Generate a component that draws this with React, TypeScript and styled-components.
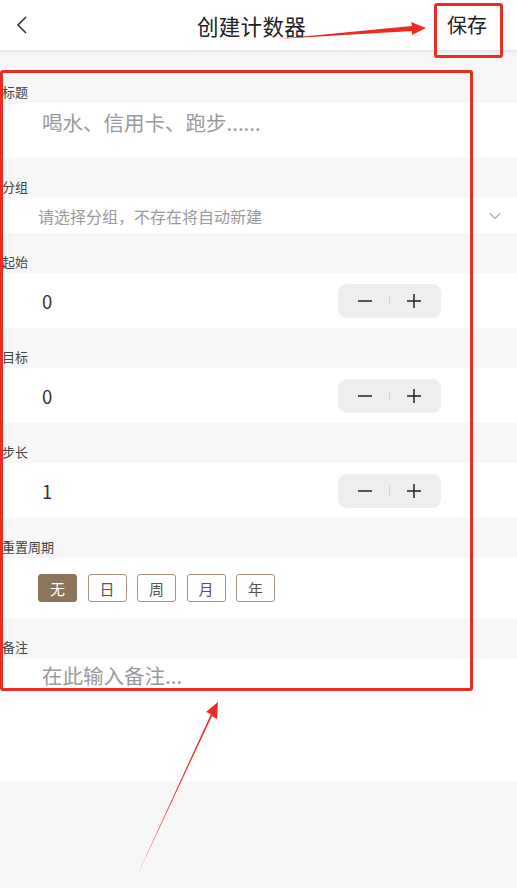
import React from 'react';
import styled, { createGlobalStyle } from 'styled-components';

const GlobalStyle = createGlobalStyle`
    html, body {
        margin: 0;
        padding: 0;
        background: #ffffff;
        font-family: "Noto Sans CJK SC", "Noto Sans", sans-serif;
    }
`;

const Page = styled.div`
    position: relative;
    width: 517px;
    height: 896px;
    overflow: hidden;
    background: #ffffff;
    display: flex;
    flex-direction: column;
`;

const Header = styled.div`
    position: relative;
    z-index: 1;
    height: 50px;
    flex-shrink: 0;
    display: grid;
    grid-template-columns: 1fr auto 1fr;
    align-items: center;
    padding: 0 30px 0 16px;
    background: #ffffff;
    box-shadow: 0 1px 4px rgba(0, 0, 0, 0.1);
`;

const BackButton = styled.div`
    width: 30px;
    height: 50px;
    display: flex;
    align-items: center;
`;

const Title = styled.div`
    font-size: 21.5px;
    color: #222;
    letter-spacing: 0.3px;
`;

const SaveButton = styled.div`
    justify-self: end;
    font-size: 20px;
    color: #222;
    padding-bottom: 2px;
`;

const Form = styled.div`
    flex: 1;
    background: #f7f7f7;
    display: flex;
    flex-direction: column;
    padding-top: 13px;
`;

const Label = styled.div`
    height: 40px;
    display: flex;
    align-items: flex-end;
    padding: 0 0 3px 2px;
    box-sizing: border-box;
    font-size: 13px;
    line-height: 16px;
    color: #444;
`;

const Row = styled.div<{ h: number; top?: boolean }>`
    height: ${p => p.h}px;
    background: #ffffff;
    display: flex;
    align-items: ${p => (p.top ? 'flex-start' : 'center')};
    justify-content: space-between;
    padding: 0 76px 0 42px;
    box-sizing: border-box;
`;

const Placeholder = styled.div<{ size: number; mt?: number }>`
    font-size: ${p => p.size}px;
    color: #9a9a9a;
    line-height: 24px;
    margin-top: ${p => p.mt ?? 0}px;
`;

const SelectRow = styled(Row)`
    padding: 0 16px 0 38px;
`;

const Value = styled.div`
    font-size: 18.5px;
    color: #333;
`;

const Stepper = styled.div`
    width: 103px;
    height: 34px;
    border-radius: 9px;
    background: #eeeeee;
    display: flex;
    align-items: center;
    justify-content: space-between;
    padding: 0 20px;
    box-sizing: border-box;
`;

const StepSign = styled.div`
    width: 14px;
    display: flex;
    justify-content: center;
`;

const StepDivider = styled.div`
    width: 1px;
    height: 9px;
    background: #d4d4d4;
`;

const PeriodRow = styled(Row)`
    justify-content: flex-start;
    gap: 10.5px;
    padding: 0 0 0 38px;
`;

const PeriodButton = styled.div<{ active?: boolean }>`
    width: 39px;
    height: 28px;
    box-sizing: border-box;
    border-radius: 3px;
    border: 1.5px solid ${p => (p.active ? '#8c7558' : '#a3927f')};
    background: ${p => (p.active ? '#8c7558' : '#ffffff')};
    color: ${p => (p.active ? '#ffffff' : '#555')};
    font-size: 15px;
    display: flex;
    align-items: center;
    justify-content: center;
`;

const Gap = styled.div`
    height: 106px;
    background: #f7f7f7;
`;

const Bottom = styled.div`
    flex: 1;
    background: #ffffff;
`;

const MarkBox = styled.div<{ x: number; y: number; w: number; h: number }>`
    position: absolute;
    left: ${p => p.x}px;
    top: ${p => p.y}px;
    width: ${p => p.w}px;
    height: ${p => p.h}px;
    border: 3.5px solid #ee2a24;
    border-radius: 3px;
    box-sizing: border-box;
    z-index: 2;
`;

const Arrows = styled.svg`
    position: absolute;
    left: 0;
    top: 0;
    z-index: 3;
`;

const periods = ['无', '日', '周', '月', '年'];

function Counter({ value }: { value: string }) {
    return (
        <Row h={55}>
            <Value>{value}</Value>
            <Stepper>
                <StepSign>
                    <svg width="14" height="14" viewBox="0 0 14 14">
                        <path d="M0 7h14" stroke="#222" strokeWidth="1.5" />
                    </svg>
                </StepSign>
                <StepDivider />
                <StepSign>
                    <svg width="14" height="14" viewBox="0 0 14 14">
                        <path d="M0 7h14M7 0v14" stroke="#222" strokeWidth="1.5" />
                    </svg>
                </StepSign>
            </Stepper>
        </Row>
    );
}

export default function App() {
    return (
        <Page>
            <GlobalStyle />
            <Header>
                <BackButton>
                    <svg width="12" height="18" viewBox="0 0 12 18">
                        <path d="M10 1L2 9l8 8" fill="none" stroke="#333" strokeWidth="1.6" />
                    </svg>
                </BackButton>
                <Title>创建计数器</Title>
                <SaveButton>保存</SaveButton>
            </Header>
            <Form>
                <Label>标题</Label>
                <Row h={55} top>
                    <Placeholder size={20.5} mt={7}>喝水、信用卡、跑步......</Placeholder>
                </Row>
                <Label>分组</Label>
                <SelectRow h={35}>
                    <Placeholder size={16}>请选择分组，不存在将自动新建</Placeholder>
                    <svg width="12" height="8" viewBox="0 0 12 8">
                        <path d="M1 1.5l5 5 5-5" fill="none" stroke="#aaa" strokeWidth="1.2" />
                    </svg>
                </SelectRow>
                <Label>起始</Label>
                <Counter value="0" />
                <Label>目标</Label>
                <Counter value="0" />
                <Label>步长</Label>
                <Counter value="1" />
                <Label>重置周期</Label>
                <PeriodRow h={60}>
                    {periods.map((p, i) => (
                        <PeriodButton key={p} active={i === 0}>{p}</PeriodButton>
                    ))}
                </PeriodRow>
                <Label>备注</Label>
                <Row h={124} top>
                    <Placeholder size={20.5} mt={5}>在此输入备注...</Placeholder>
                </Row>
                <Gap />
                <Bottom />
            </Form>

            <MarkBox x={434} y={3} w={69} h={55} />
            <MarkBox x={0} y={70} w={473} h={621} />
            <Arrows width="517" height="896" viewBox="0 0 517 896">
                <path d="M277 39 L412 26 L411 22 L426 28 L412 35 L412 31 Z" fill="#ee2a24" />
                <path d="M136 878 L211 714 L206 712 L218 702 L217 719 L212 716 Z" fill="#ee2a24" />
            </Arrows>
        </Page>
    );
}
